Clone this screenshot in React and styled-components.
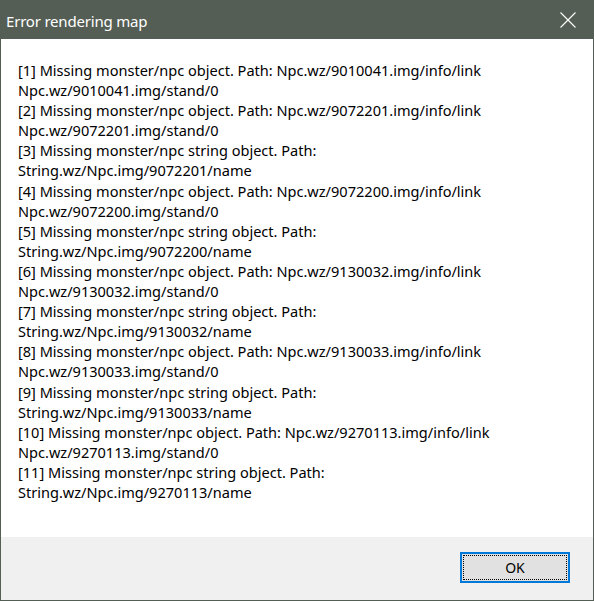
import React from "react";
import styled, { createGlobalStyle } from "styled-components";

const GlobalStyle = createGlobalStyle`
  html, body {
    margin: 0;
    padding: 0;
    background: #ffffff;
  }
  body {
    font-family: "Noto Sans", "Liberation Sans", sans-serif;
  }
`;

const Window = styled.div`
  width: 594px;
  height: 601px;
  box-sizing: border-box;
  border: 1px solid #545e54;
  border-top: none;
  display: flex;
  flex-direction: column;
  background: #ffffff;
`;

const TitleBar = styled.div`
  height: 39px;
  flex: none;
  background: #545e54;
  display: flex;
  align-items: center;
  justify-content: space-between;
  margin: 0 -1px;
  padding-left: 6px;
  color: #ffffff;
`;

const Title = styled.div`
  font-size: 15px;
  letter-spacing: -0.2px;
  padding-top: 2px;
`;

const CloseButton = styled.div`
  width: 46px;
  height: 39px;
  margin-right: 3px;
  display: flex;
  align-items: center;
  justify-content: center;
`;

const Body = styled.div`
  flex: 1;
  padding: 21px 17px 0;
  font-size: 14.55px;
  line-height: 20.1px;
  color: #000000;
`;

const Line = styled.div`
  white-space: nowrap;
`;

const Footer = styled.div`
  height: 63px;
  flex: none;
  background: #f0f0f0;
  display: flex;
  align-items: flex-start;
  justify-content: flex-end;
  padding: 15px 23px 0 0;
  box-sizing: border-box;
`;

const OkButton = styled.button`
  width: 110px;
  height: 31px;
  box-sizing: border-box;
  border: 2px solid #0078d7;
  background: #e1e1e1;
  padding: 1px;
  font-family: inherit;
  font-size: 14px;
  color: #000000;
  display: flex;
  cursor: default;
`;

const FocusRing = styled.span`
  flex: 1;
  border: 1px dotted #000000;
  display: flex;
  align-items: center;
  justify-content: center;
`;

const lines = [
  "[1] Missing monster/npc object. Path: Npc.wz/9010041.img/info/link",
  "Npc.wz/9010041.img/stand/0",
  "[2] Missing monster/npc object. Path: Npc.wz/9072201.img/info/link",
  "Npc.wz/9072201.img/stand/0",
  "[3] Missing monster/npc string object. Path:",
  "String.wz/Npc.img/9072201/name",
  "[4] Missing monster/npc object. Path: Npc.wz/9072200.img/info/link",
  "Npc.wz/9072200.img/stand/0",
  "[5] Missing monster/npc string object. Path:",
  "String.wz/Npc.img/9072200/name",
  "[6] Missing monster/npc object. Path: Npc.wz/9130032.img/info/link",
  "Npc.wz/9130032.img/stand/0",
  "[7] Missing monster/npc string object. Path:",
  "String.wz/Npc.img/9130032/name",
  "[8] Missing monster/npc object. Path: Npc.wz/9130033.img/info/link",
  "Npc.wz/9130033.img/stand/0",
  "[9] Missing monster/npc string object. Path:",
  "String.wz/Npc.img/9130033/name",
  "[10] Missing monster/npc object. Path: Npc.wz/9270113.img/info/link",
  "Npc.wz/9270113.img/stand/0",
  "[11] Missing monster/npc string object. Path:",
  "String.wz/Npc.img/9270113/name",
];

export default function App() {
  return (
    <>
      <GlobalStyle />
      <Window>
        <TitleBar>
          <Title>Error rendering map</Title>
          <CloseButton>
            <svg width="16" height="16" viewBox="0 0 16 16">
              <path d="M0.5 0.5 L15.5 15.5 M15.5 0.5 L0.5 15.5" stroke="#ffffff" strokeWidth="1.1" fill="none" />
            </svg>
          </CloseButton>
        </TitleBar>
        <Body>
          {lines.map((l, i) => (
            <Line key={i}>{l}</Line>
          ))}
        </Body>
        <Footer>
          <OkButton>
            <FocusRing>OK</FocusRing>
          </OkButton>
        </Footer>
      </Window>
    </>
  );
}
